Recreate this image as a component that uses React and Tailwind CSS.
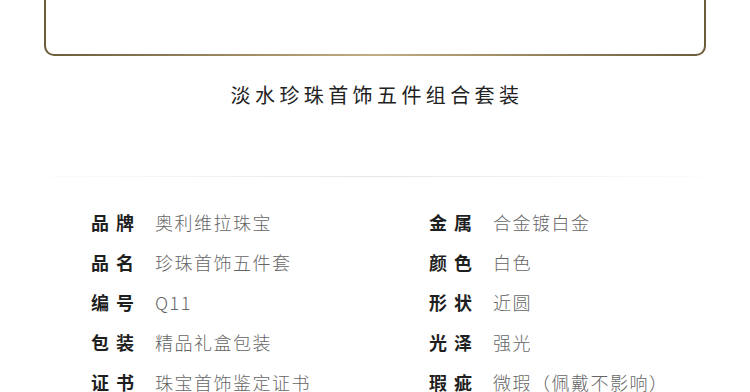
const specs = [
  ['品牌', '奥利维拉珠宝', '金属', '合金镀白金'],
  ['品名', '珍珠首饰五件套', '颜色', '白色'],
  ['编号', 'Q11', '形状', '近圆'],
  ['包装', '精品礼盒包装', '光泽', '强光'],
  ['证书', '珠宝首饰鉴定证书', '瑕疵', '微瑕（佩戴不影响）'],
];

function Spec({ label, value }) {
  return (
    <div className="flex items-center">
      <span className="w-[64px] shrink-0 text-[18px] font-bold tracking-[7px] text-[#1f1f1f]">{label}</span>
      <span className="text-[18px] font-light tracking-[1.5px] text-[#666]">{value}</span>
    </div>
  );
}

export default function App() {
  return (
    <div
      className="h-[392px] w-[750px] overflow-hidden bg-white"
      style={{ fontFamily: '"Noto Sans CJK SC", "Noto Sans", sans-serif' }}
    >
      <div className="px-[44px]">
        <div className="rounded-b-[10px] bg-gradient-to-r from-[#6c5c3b] via-[#c2ae84] to-[#6c5c3b] px-[2px] pb-[2px]">
          <div className="h-[54px] rounded-b-[8px] bg-white" />
        </div>
      </div>

      <h1 className="mt-[25px] h-[28px] pl-[4px] text-center text-[20px] leading-[28px] tracking-[4.4px] text-[#222]">
        淡水珍珠首饰五件组合套装
      </h1>

      <div className="mx-[12px] mt-[67px] h-px bg-gradient-to-r from-transparent via-[#e6e6e6] to-transparent" />

      <div className="mt-[25px] grid grid-cols-[338px_1fr] pl-[91px]">
        {specs.map(([l1, v1, l2, v2]) => (
          <div key={l1} className="contents">
            <div className="flex h-[40px] items-center">
              <Spec label={l1} value={v1} />
            </div>
            <div className="flex h-[40px] items-center">
              <Spec label={l2} value={v2} />
            </div>
          </div>
        ))}
      </div>
    </div>
  );
}
